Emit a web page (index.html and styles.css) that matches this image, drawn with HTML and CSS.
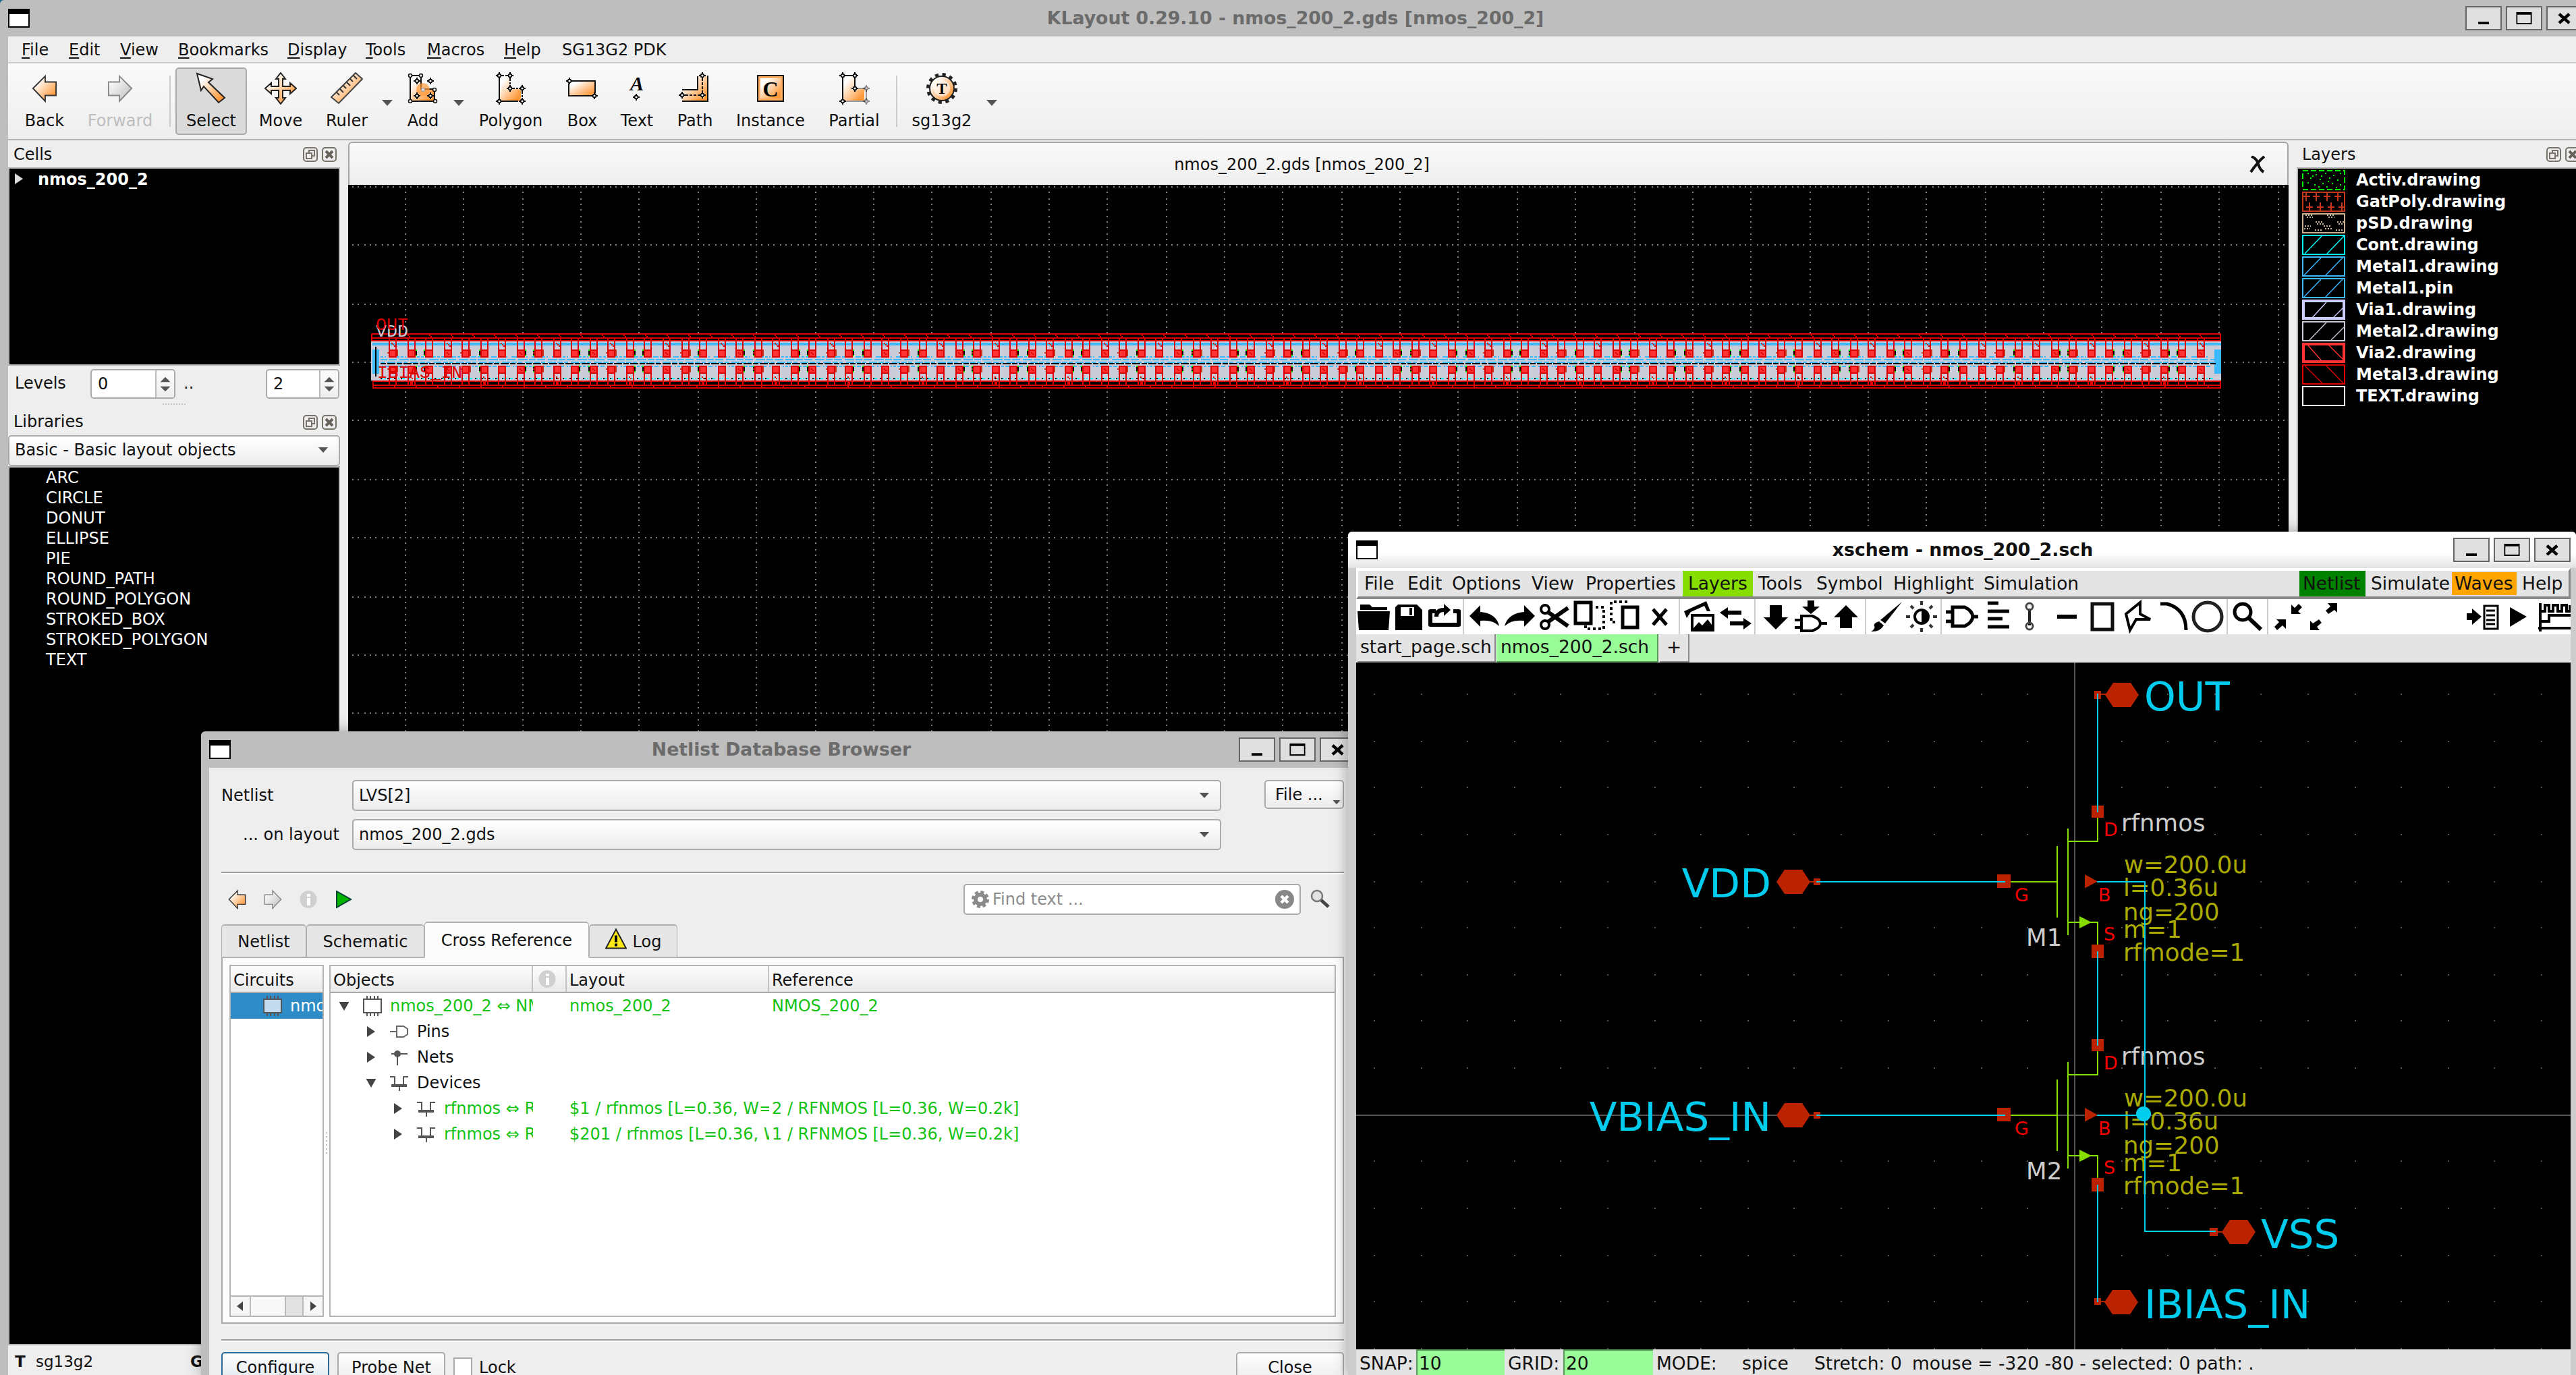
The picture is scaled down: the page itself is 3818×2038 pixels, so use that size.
FILE: index.html
```html
<!DOCTYPE html>
<html lang="en">
<head>
<meta charset="utf-8">
<title>KLayout 0.29.10 - nmos_200_2.gds [nmos_200_2]</title>
<link rel="stylesheet" href="styles.css">
</head>
<body>
<svg class="defs" width="0" height="0">
  <defs>
    <linearGradient id="og" x1="0" y1="0" x2="1" y2="1"><stop offset="0.2" stop-color="#fff"/><stop offset="0.85" stop-color="#ff9a3c"/></linearGradient>
    <linearGradient id="gg" x1="0" y1="0" x2="1" y2="1"><stop offset="0.1" stop-color="#fff"/><stop offset="1" stop-color="#bbb"/></linearGradient>
    <symbol id="float" viewBox="0 0 22 22"><rect x="1" y="1" width="20" height="20" rx="4" fill="none" stroke="#77736a" stroke-width="2"/><path d="M9 9V5h8v8h-4M5 9h8v8H5z" fill="none" stroke="#77736a" stroke-width="2"/></symbol>
    <symbol id="shut" viewBox="0 0 22 22"><rect x="1" y="1" width="20" height="20" rx="4" fill="none" stroke="#77736a" stroke-width="2"/><path d="M6 6l10 10M16 6L6 16" stroke="#66625a" stroke-width="4"/></symbol>
    <symbol id="down" viewBox="0 0 16 10"><path d="M0 0h16L8 9z" fill="#555"/></symbol>
    <symbol id="spin" viewBox="0 0 28 40"><path d="M6 17h16L14 9zM6 24h16l-8 8z" fill="#555"/></symbol>
    <symbol id="min" viewBox="0 0 54 36"><path d="M18 24h18v4H18z"/></symbol>
    <symbol id="max" viewBox="0 0 54 36"><path d="M14 8h26v20H14zM16 12v14h22V12z" fill-rule="evenodd"/></symbol>
    <symbol id="x" viewBox="0 0 54 36"><path d="M18 11l17 15M35 11L18 26" stroke="#000" stroke-width="5"/></symbol>
    <symbol id="back" viewBox="0 0 40 44"><path d="M2 22L21 3v9h17v21H21v9z" fill="url(#og)" stroke="#333" stroke-width="2"/></symbol>
    <symbol id="fwd" viewBox="0 0 40 44"><path d="M38 22L19 3v9H2v21h17v9z" fill="url(#gg)" stroke="#888" stroke-width="2"/></symbol>
    <symbol id="info" viewBox="0 0 26 28"><ellipse cx="13" cy="14" rx="12.5" ry="13" fill="#d0d0d0"/><path d="M11 12h5v11h-5zM11 6h5v4h-5z" fill="#fff"/></symbol>
    <symbol id="chip" viewBox="0 0 28 30"><path d="M1 5h26v20H1zM6 5V0M11 5V0M17 5V0M22 5V0M6 25v5M11 25v5M17 25v5M22 25v5" stroke-width="2"/></symbol>
    <symbol id="mos" viewBox="0 0 28 24"><path d="M0 3h7v12M27 3h-7v12M14 16v8" fill="none" stroke="#555" stroke-width="2"/><path d="M2 14h23v4H2z" fill="#555"/></symbol>
    <symbol id="hd" viewBox="-5 -5 10 10"><path d="M0-5L5 0 0 5-5 0z" fill="#fff"/><path d="M0-5V5M-5 0H5" stroke="#000" stroke-width="2"/><circle r="2.4" fill="#fff" stroke="#000" stroke-width="1.6"/></symbol>
    <symbol id="tri-r" viewBox="0 0 12 16"><path d="M0 0l12 8L0 16z" fill="currentColor"/></symbol>
    <symbol id="tri-d" viewBox="0 0 16 14"><path d="M0 0h16L8 14z" fill="#444"/></symbol>
  </defs>
</svg>

<main class="main-window">
  <header class="titlebar">
    <i class="wicon"></i>
    <h1>KLayout 0.29.10 - nmos_200_2.gds [nmos_200_2]</h1>
    <div class="wbtns"><svg><use href="#min"/></svg><svg><use href="#max"/></svg><svg><use href="#x"/></svg></div>
  </header>
  <div class="client">
    <nav class="menubar">
      <span><u>F</u>ile</span><span><u>E</u>dit</span><span><u>V</u>iew</span><span><u>B</u>ookmarks</span><span><u>D</u>isplay</span><span><u>T</u>ools</span><span><u>M</u>acros</span><span><u>H</u>elp</span><span>SG13G2 PDK</span>
    </nav>
    <div class="toolbar">
      <div class="tool t-back"><svg class="arr"><use href="#back"/></svg>Back</div>
      <div class="tool t-fwd off"><svg class="arr"><use href="#fwd"/></svg>Forward</div>
      <i class="sep s1"></i>
      <div class="tool t-sel on"><svg viewBox="0 0 48 48"><path d="M3 2l23 8-6 5 24 23-9 7-22-24-4 6z" fill="url(#og)" stroke="#222" stroke-width="2"/></svg>Select</div>
      <div class="tool t-move"><svg viewBox="0 0 48 48"><path d="M24 1l7 9h-4v11h11v-5l9 8-9 8v-5H27v11h4l-7 9-7-9h4V27H10v5l-9-8 9-8v5h11V10h-4z" fill="url(#og)" stroke="#222" stroke-width="2"/></svg>Move</div>
      <div class="tool t-ruler"><svg viewBox="0 0 48 48"><path d="M37 1l10 9-35 36-11-9z" fill="url(#og)" stroke="#444" stroke-width="2"/><path d="M34 5l5 5M29 10l4 4M24 15l5 5M19 20l4 4M14 25l5 5M9 30l4 4" stroke="#333" stroke-width="2"/></svg>Ruler</div>
      <svg class="drop"><use href="#down"/></svg>
      <div class="tool t-add"><svg viewBox="0 0 48 48"><path d="M5 5h16v20h20v18H5z" fill="url(#og)" stroke="#111" stroke-width="2"/><circle cx="24" cy="26" r="10" fill="#ff9a3c" opacity=".7"/><circle cx="24" cy="26" r="2.5" fill="#ddd" stroke="#999"/><use href="#hd" x="10" y="8" width="10" height="10"/><use href="#hd" x="30" y="8" width="10" height="10"/><use href="#hd" x="10" y="30" width="10" height="10"/><use href="#hd" x="30" y="30" width="10" height="10"/><g fill="#fff" stroke="#111" stroke-width="1.5"><circle cx="5" cy="5" r="2.5"/><circle cx="21" cy="5" r="2.5"/><circle cx="41" cy="26" r="2.5"/><circle cx="5" cy="43" r="2.5"/><circle cx="42" cy="43" r="2.5"/></g></svg>Add</div>
      <svg class="drop"><use href="#down"/></svg>
      <div class="tool t-poly"><svg viewBox="0 0 48 48"><path d="M7 5h16v20h16v18H7z" fill="url(#og)"/><path d="M7 9v30M11 43h24" stroke="#111" stroke-width="2"/><path d="M11 5h8M23 10v12M27 24h8M41 29v10" stroke="#111" stroke-width="2" stroke-dasharray="3 2"/><use href="#hd" x="2" y="0" width="10" height="10"/><use href="#hd" x="18" y="0" width="10" height="10"/><use href="#hd" x="18" y="19" width="10" height="10"/><use href="#hd" x="36" y="19" width="10" height="10"/><use href="#hd" x="2" y="38" width="10" height="10"/><use href="#hd" x="36" y="38" width="10" height="10"/></svg>Polygon</div>
      <div class="tool t-box"><svg viewBox="0 0 48 48"><path d="M4 13h39v22H4z" fill="url(#og)" stroke="#111" stroke-width="2"/><use href="#hd" x="0" y="8" width="10" height="10"/><use href="#hd" x="37" y="30" width="10" height="10"/></svg>Box</div>
      <div class="tool t-text"><svg viewBox="0 0 48 48"><text x="24" y="27" text-anchor="middle" class="aicon">A</text><use href="#hd" x="18" y="32" width="10" height="10"/></svg>Text</div>
      <div class="tool t-path"><svg viewBox="0 0 48 48"><path d="M5 26h23V5h15v38H5z" fill="url(#og)"/><path d="M5 26h23V6M43 5v38H5" fill="none" stroke="#111" stroke-width="2"/><path d="M35 9v22M10 34h20" stroke="#111" stroke-width="2" stroke-dasharray="4 2"/><use href="#hd" x="30" y="0" width="10" height="10"/><use href="#hd" x="0" y="29" width="10" height="10"/><use href="#hd" x="30" y="29" width="10" height="10"/></svg>Path</div>
      <div class="tool t-inst"><svg viewBox="0 0 48 48"><rect x="5" y="5" width="38" height="38" fill="#ffae66" stroke="#111" stroke-width="2"/><rect x="9" y="9" width="30" height="30" fill="url(#og)"/><text x="24" y="36" text-anchor="middle" class="cicon">C</text></svg>Instance</div>
      <div class="tool t-part"><svg viewBox="0 0 48 48"><path d="M7 5h18v20h14v18H7z" fill="url(#og)"/><path d="M7 5v38M7 5h18v18" fill="none" stroke="#111" stroke-width="2"/><path d="M28 24h14v19H10" fill="none" stroke="#999" stroke-width="2"/><use href="#hd" x="2" y="0" width="10" height="10"/><use href="#hd" x="20" y="0" width="10" height="10"/><use href="#hd" x="20" y="19" width="10" height="10"/><use href="#hd" x="2" y="38" width="10" height="10"/><g opacity=".45"><use href="#hd" x="37" y="19" width="10" height="10"/><use href="#hd" x="37" y="38" width="10" height="10"/></g></svg>Partial</div>
      <i class="sep s2"></i>
      <div class="tool t-sg"><svg viewBox="0 0 48 48"><circle cx="24" cy="24" r="20" fill="none" stroke="#222" stroke-width="6" stroke-dasharray="5 5.47"/><circle cx="24" cy="24" r="18" fill="url(#og)" stroke="#222" stroke-width="2"/><circle cx="24" cy="24" r="12" fill="#fff" opacity=".55"/><text x="24" y="32" text-anchor="middle" class="ticon">T</text></svg>sg13g2</div>
      <svg class="drop"><use href="#down"/></svg>
    </div>
    <div class="workspace">
      <aside class="left-dock">
        <div class="dock-title"><span>Cells</span><svg><use href="#float"/></svg><svg><use href="#shut"/></svg></div>
        <div class="cells"><svg><use href="#tri-r"/></svg><b>nmos_200_2</b></div>
        <div class="levels"><label>Levels</label><div class="spin sp1"><span>0</span><svg><use href="#spin"/></svg></div><em>..</em><div class="spin sp2"><span>2</span><svg><use href="#spin"/></svg></div></div>
        <div class="grip"></div>
        <div class="dock-title lib"><span>Libraries</span><svg><use href="#float"/></svg><svg><use href="#shut"/></svg></div>
        <div class="combo libcombo"><span>Basic - Basic layout objects</span><svg><use href="#down"/></svg></div>
        <ul class="liblist"><li>ARC</li><li>CIRCLE</li><li>DONUT</li><li>ELLIPSE</li><li>PIE</li><li>ROUND_PATH</li><li>ROUND_POLYGON</li><li>STROKED_BOX</li><li>STROKED_POLYGON</li><li>TEXT</li></ul>
        <div class="status"><b>T</b><span>sg13g2</span><b>G</b></div>
      </aside>
      <section class="view">
        <div class="view-tab"><span>nmos_200_2.gds [nmos_200_2]</span><svg viewBox="0 0 26 26"><path d="M4 1q8 3 10 11t8 12M23 1Q14 8 3 24" fill="none" stroke="#111" stroke-width="4"/></svg></div>
        <svg class="layout-canvas" viewBox="516 274 2876 1764" shape-rendering="crispEdges">
          <g id="grid" fill="#808080"></g>
          <g id="strip"></g>
          <g class="gds">
            <text x="557" y="499" textLength="48" lengthAdjust="spacingAndGlyphs" fill="#ccccd9">VDD</text>
            <text x="557" y="489" textLength="48" lengthAdjust="spacingAndGlyphs" fill="#dd0000">OUT</text>
            <text x="559" y="560" textLength="126" lengthAdjust="spacingAndGlyphs" fill="#dd0000">IBIAS_IN</text>
          </g>
        </svg>
      </section>
      <aside class="layers">
        <div class="dock-title"><span>Layers</span><svg><use href="#float"/></svg><svg><use href="#shut"/></svg></div>
        <ul>
          <li><svg viewBox="0 0 64 30" shape-rendering="crispEdges"><rect x="1" y="1" width="62" height="28" fill="none" stroke="#0f0" stroke-width="2" stroke-dasharray="8 4"/><path d="M8 5h2M20 7h2M34 5h2M46 8h2M56 5h2M12 12h2M26 14h2M40 12h2M52 15h2M8 19h2M18 22h2M30 20h2M44 20h2M56 22h2M24 25h2M36 25h2M50 26h2M15 9h2M28 9h2M38 17h2" stroke="#0f0" stroke-width="2"/></svg>Activ.drawing</li>
          <li><svg viewBox="0 0 64 30" shape-rendering="crispEdges"><path d="M1 1h62v28H1zM2 7h10M6 2v12M16 7h10M21 2v12M32 7h10M37 2v12M48 7h10M53 2v12M6 23h10M11 16v12M22 23h10M27 16v12M38 23h10M43 16v12M54 23h10M59 16v12" fill="none" stroke="#c4391e" stroke-width="2"/></svg>GatPoly.drawing</li>
          <li><svg viewBox="0 0 64 30" shape-rendering="crispEdges"><rect x="1" y="1" width="62" height="28" fill="none" stroke="#c8b494" stroke-width="2"/><path d="M5 3h10M7 6h9M37 3h10M39 6h9M20 13h10M22 16h11M52 13h10M54 16h9M4 19h9M3 23h9M32 19h10M34 23h10M19 25h10M50 25h10" stroke="#c8b494" stroke-width="2" stroke-dasharray="2 2"/></svg>pSD.drawing</li>
          <li><svg viewBox="0 0 64 30"><path d="M1 1h62v28H1z" fill="none" stroke="#0ff" stroke-width="2"/><path d="M4 28L29 2M37 28L62 2" stroke="#0ff" stroke-width="1.4"/></svg>Cont.drawing</li>
          <li><svg viewBox="0 0 64 30"><path d="M1 1h62v28H1z" fill="none" stroke="#3db9ff" stroke-width="2"/><path d="M3 28L28 2M35 28L60 2" stroke="#3db9ff" stroke-width="1.4"/></svg>Metal1.drawing</li>
          <li><svg viewBox="0 0 64 30"><path d="M1 1h62v28H1z" fill="none" stroke="#3db9ff" stroke-width="2"/><path d="M3 28L28 2M35 28L60 2" stroke="#3db9ff" stroke-width="1.4"/></svg>Metal1.pin</li>
          <li><svg viewBox="0 0 64 30"><path d="M2 2h60v26H2z" fill="none" stroke="#ccccff" stroke-width="4"/><path d="M14 28L36 4M46 27L61 12" stroke="#ccccff" stroke-width="1.4"/></svg>Via1.drawing</li>
          <li><svg viewBox="0 0 64 30"><path d="M1 1h62v28H1z" fill="none" stroke="#ccccd9" stroke-width="2"/><path d="M11 28L36 2M43 28L62 9" stroke="#ccccd9" stroke-width="1.4"/></svg>Metal2.drawing</li>
          <li><svg viewBox="0 0 64 30"><path d="M2 2h60v26H2z" fill="none" stroke="#ff3333" stroke-width="4"/><path d="M9 4l21 24M40 4l20 20" stroke="#ff3333" stroke-width="1.4"/></svg>Via2.drawing</li>
          <li><svg viewBox="0 0 64 30"><path d="M1 1h62v28H1z" fill="none" stroke="#dd0000" stroke-width="2"/><path d="M4 2l26 26M36 2l25 26" stroke="#dd0000" stroke-width="1.4"/></svg>Metal3.drawing</li>
          <li><svg viewBox="0 0 64 30"><path d="M1 1h62v28H1z" fill="none" stroke="#fff" stroke-width="2"/></svg>TEXT.drawing</li>
        </ul>
      </aside>
    </div>
  </div>
</main>

<section class="dialog">
  <header class="titlebar">
    <i class="wicon"></i>
    <h1>Netlist Database Browser</h1>
    <div class="wbtns"><svg><use href="#min"/></svg><svg><use href="#max"/></svg><svg><use href="#x"/></svg></div>
  </header>
  <div class="dialog-body">
    <div class="form">
      <label>Netlist</label><div class="combo"><span>LVS[2]</span><svg><use href="#down"/></svg></div><div class="filebtn">File ...<svg><use href="#down"/></svg></div>
      <label class="r">... on layout</label><div class="combo"><span>nmos_200_2.gds</span><svg><use href="#down"/></svg></div>
    </div>
    <hr>
    <div class="navrow">
      <svg class="n1"><use href="#back"/></svg><svg class="n1"><use href="#fwd"/></svg><svg class="n3"><use href="#info"/></svg>
      <svg class="n4" viewBox="0 0 24 26"><path d="M1 1l21 12L1 25z" fill="#00b400" stroke="#043" stroke-width="2"/></svg>
      <div class="search"><svg viewBox="0 0 28 28"><circle cx="14" cy="14" r="7" fill="none" stroke="#8a8a8a" stroke-width="6"/><circle cx="14" cy="14" r="11" fill="none" stroke="#8a8a8a" stroke-width="4" stroke-dasharray="5 3.64"/></svg><span>Find text ...</span><svg viewBox="0 0 28 28"><circle cx="14" cy="14" r="14" fill="#888"/><path d="M9 9l10 10M19 9L9 19" stroke="#fff" stroke-width="4.5"/></svg></div>
      <svg class="mag" viewBox="0 0 30 30"><path d="M16 16l11 10" stroke="#444" stroke-width="5"/><circle cx="10" cy="10" r="8" fill="#e4e4e4" stroke="#777" stroke-width="2.5"/></svg>
    </div>
    <div class="tabs"><span class="tb1">Netlist</span><span class="tb2">Schematic</span><span class="tb3">Cross Reference</span><span class="tb4"><svg viewBox="0 0 32 30"><path d="M16 1l15 28H1z" fill="#ffe919" stroke="#222" stroke-width="2"/><path d="M14 10h4v10h-4zM14 22h4v4h-4z"/></svg>Log</span></div>
    <div class="pane">
      <div class="circuits">
        <div class="th"><span>Circuits</span></div>
        <div class="sel"><svg><use href="#chip"/></svg><span>nmos_200_2</span></div>
        <div class="hscroll"><svg viewBox="0 0 28 28"><path d="M18 7v14L9 14z" fill="#444"/></svg><i></i><b></b><svg viewBox="0 0 28 28"><path d="M10 7v14l9-7z" fill="#444"/></svg></div>
      </div>
      <div class="splitter"></div>
      <div class="objects">
        <div class="th row"><span>Objects</span><span><svg class="hi"><use href="#info"/></svg></span><span>Layout</span><span>Reference</span></div>
        <div class="row g"><span class="l1"><svg class="td"><use href="#tri-d"/></svg><svg class="ic chip"><use href="#chip"/></svg>nmos_200_2 ⇔ NMOS_200_2</span><span></span><span>nmos_200_2</span><span>NMOS_200_2</span></div>
        <div class="row"><span class="l2"><svg class="tr"><use href="#tri-r"/></svg><svg class="ic" viewBox="0 0 28 24"><path d="M0 12h10M10 4h10l6 4v8l-6 4H10z" fill="none" stroke="#666" stroke-width="2"/></svg>Pins</span></div>
        <div class="row"><span class="l2"><svg class="tr"><use href="#tri-r"/></svg><svg class="ic" viewBox="0 0 28 24"><path d="M2 7h24M11 7v17" stroke="#555" stroke-width="2"/><circle cx="11" cy="7" r="5" fill="#555"/></svg>Nets</span></div>
        <div class="row"><span class="l2"><svg class="td"><use href="#tri-d"/></svg><svg class="ic"><use href="#mos"/></svg>Devices</span></div>
        <div class="row g"><span class="l3"><svg class="tr"><use href="#tri-r"/></svg><svg class="ic"><use href="#mos"/></svg>rfnmos ⇔ RFNMOS</span><span></span><span>$1 / rfnmos [L=0.36, W=0.2k]</span><span>2 / RFNMOS [L=0.36, W=0.2k]</span></div>
        <div class="row g"><span class="l3"><svg class="tr"><use href="#tri-r"/></svg><svg class="ic"><use href="#mos"/></svg>rfnmos ⇔ RFNMOS</span><span></span><span>$201 / rfnmos [L=0.36, W=0.2k]</span><span>1 / RFNMOS [L=0.36, W=0.2k]</span></div>
      </div>
    </div>
    <hr class="h2">
    <div class="buttons"><button class="def">Configure</button><button>Probe Net</button><i class="check"></i><span>Lock</span><button class="close">Close</button></div>
  </div>
</section>

<section class="xschem">
  <header class="titlebar">
    <i class="wicon"></i>
    <h1>xschem - nmos_200_2.sch</h1>
    <div class="wbtns"><svg><use href="#min"/></svg><svg><use href="#max"/></svg><svg><use href="#x"/></svg></div>
  </header>
  <div class="xbody">
    <nav class="xmenu">
      <span>File</span><span>Edit</span><span>Options</span><span>View</span><span>Properties</span><span class="lay">Layers</span><span>Tools</span><span>Symbol</span><span>Highlight</span><span>Simulation</span><span class="net">Netlist</span><span>Simulate</span><span class="wav">Waves</span><span>Help</span>
    </nav>
    <div class="xtools">
      <svg viewBox="0 0 52 52"><path d="M6 8h14l4 4h22v4H6zM2 18h48l-2 28H4z"/></svg>
      <svg viewBox="0 0 52 52"><path d="M10 8h28l8 8v30H6V12zM14 12v13h20V12zM27 13h4v11h-4z" fill-rule="evenodd"/></svg>
      <svg viewBox="0 0 52 52"><path d="M14 18H6v20h42V18h-8" fill="none" stroke="#000" stroke-width="6" stroke-linejoin="round"/><path d="M12 26q0-13 14-13V7l10 9-10 9v-6q-8 0-8 7z"/></svg>
      <i></i>
      <svg viewBox="0 0 52 52"><path d="M4 25L20 9v10q24 2 28 21-10-10-28-8v9z"/></svg>
      <svg viewBox="0 0 52 52"><path d="M49 25L33 9v10Q9 21 4 40q10-10 29-8v9z"/></svg>
      <svg viewBox="0 0 52 52"><g fill="none" stroke="#000" stroke-width="4"><circle cx="12" cy="15" r="6"/><circle cx="12" cy="38" r="6"/></g><path d="M16 19l30 21M16 34l30-21" stroke="#000" stroke-width="6"/></svg>
      <svg viewBox="0 0 52 52"><path d="M5 5h23v31H5z" fill="none" stroke="#000" stroke-width="5"/><path d="M35 12h12v32H20v-6" fill="none" stroke="#000" stroke-width="4" stroke-dasharray="4 4"/></svg>
      <svg viewBox="0 0 52 52"><path d="M23 12h22v30H23z" fill="none" stroke="#000" stroke-width="5"/><path d="M30 4H6v30h10" fill="none" stroke="#000" stroke-width="4" stroke-dasharray="4 4"/></svg>
      <svg viewBox="0 0 52 52"><path d="M16 15l20 23M36 15L16 38" stroke="#000" stroke-width="5"/></svg>
      <i></i>
      <svg viewBox="0 0 52 52"><path d="M2 18L35 3l6 15h-5l-4-8-20 9-6 9z"/><path d="M12 22h35v26H12zM16 26v17l8-9 5 5 8-9 6 8V26z" fill-rule="evenodd"/></svg>
      <svg viewBox="0 0 52 52"><path d="M3 20L15 12v5h20v6H15v6zM50 36L38 28v5H18v6h20v6z"/></svg>
      <i></i>
      <svg viewBox="0 0 52 52"><path d="M17 9h18v18h9L26 45 8 27h9z"/></svg>
      <svg viewBox="0 0 52 52"><path d="M21 2h10v9h8L26 22 13 11h8z"/><path d="M12 25h16q12 4 12 11t-12 11H12zM2 31h10M2 42h10M40 36h10" fill="none" stroke="#000" stroke-width="4"/></svg>
      <svg viewBox="0 0 52 52"><path d="M17 43h18V27h9L26 9 8 27h9z"/></svg>
      <i></i>
      <svg viewBox="0 0 52 52"><path d="M49 4L24 36l-7-5zM15 33l7 6q-6 10-19 9 7-4 5-8t7-7z"/></svg>
      <svg viewBox="0 0 52 52"><circle cx="26" cy="26" r="10" fill="none" stroke="#000" stroke-width="4"/><path d="M26 15a11 11 0 0 1 0 22z"/><path d="M26 3v6M26 43v6M3 26h6M43 26h6M10 10l4 4M42 10l-4 4M10 42l4-4M42 42l-4-4" stroke="#333" stroke-width="4"/></svg>
      <i></i>
      <svg viewBox="0 0 52 52"><path d="M12 12h18q11 5 12 14-1 9-12 14H12zM2 19h10M2 33h10M42 26h8" fill="none" stroke="#000" stroke-width="5"/></svg>
      <svg viewBox="0 0 52 52"><path d="M12 6h16M12 18h32M12 29h22M12 41h32" stroke="#000" stroke-width="5"/></svg>
      <svg viewBox="0 0 52 52"><path d="M22 14v25" stroke="#222" stroke-width="4"/><circle cx="22" cy="11" r="5" fill="none" stroke="#444" stroke-width="3"/><circle cx="22" cy="40" r="5" fill="none" stroke="#444" stroke-width="3"/></svg>
      <svg viewBox="0 0 52 52"><path d="M11 26h29" stroke="#000" stroke-width="6"/></svg>
      <svg viewBox="0 0 52 52"><path d="M11 7h30v38H11z" fill="none" stroke="#111" stroke-width="5"/></svg>
      <svg viewBox="0 0 52 52"><path d="M30 5v17l15 8H24l-9 16L9 22z" fill="none" stroke="#000" stroke-width="4"/></svg>
      <svg viewBox="0 0 52 52"><path d="M8 7h10q28 8 28 39" fill="none" stroke="#000" stroke-width="5"/></svg>
      <svg viewBox="0 0 52 52"><circle cx="26" cy="26" r="21" fill="none" stroke="#222" stroke-width="5"/></svg>
      <i></i>
      <svg viewBox="0 0 52 52"><circle cx="18" cy="19" r="12" fill="none" stroke="#000" stroke-width="5"/><path d="M27 28l18 17" stroke="#000" stroke-width="6"/></svg>
      <i></i>
      <svg viewBox="0 0 52 52"><path d="M30 8v14h14l-4-4 6-6-5-5-6 6zM22 44V30H8l4 4-7 7 4 5 8-7z"/></svg>
      <svg viewBox="0 0 52 52"><path d="M46 6v14l-4-4-9 6-4-5 7-6-4-5zM6 46V32l4 4 9-6 4 5-7 6 4 5z"/></svg>
      <b></b>
      <svg viewBox="0 0 52 52"><path d="M2 21h8v-7l14 12-14 12v-7H2z"/><path d="M28 10h20v34H28zM31 17h13M31 24h13M31 31h13M31 37h13" fill="none" stroke="#000" stroke-width="3"/></svg>
      <svg viewBox="0 0 52 52"><path d="M14 12l25 14-25 15z"/></svg>
      <svg viewBox="0 0 52 52"><path d="M7 6v42M4 43h48M8 33h12V24h32M8 18h6V9h6v9h6V9h7v9h6V9h7v9h5V9" fill="none" stroke="#000" stroke-width="4"/></svg>
    </div>
    <div class="xtabs"><span>start_page.sch</span><span class="act">nmos_200_2.sch</span><span class="plus">+</span></div>
    <svg class="schem" viewBox="2010 982 1800 1018">
      <g id="dots" fill="#555" shape-rendering="crispEdges"></g>
      <path d="M3075 982v1018M2010 1653h1800" stroke="#555" stroke-width="2" shape-rendering="crispEdges"/>
      <defs>
        <g id="fet">
          <path d="M3109 1203v44h-44M3065 1228v158M3049 1254v106M2972 1307h77M3065 1367h44v40" fill="none" stroke="#8d0" stroke-width="2"/>
          <path d="M3082 1358l18 9-18 9z" fill="#8d0"/>
          <path d="M3100 1194h18v18h-18zM3100 1400h18v20h-18zM2960 1296h20v20h-20zM3090 1296l19 10.500-19 10z" fill="#b20"/>
          <g fill="#f00" font-size="27"><text x="3118" y="1239">D</text><text x="2986" y="1336">G</text><text x="3110" y="1336">B</text><text x="3118" y="1394">S</text></g>
          <text x="3144" y="1232" fill="#ccc">rfnmos</text>
          <g fill="#aa0"><text x="3148" y="1294">w=200.0u</text><text x="3147" y="1328">l=0.36u</text><text x="3147" y="1364">ng=200</text><text x="3147" y="1390">m=1</text><text x="3147" y="1424">rfmode=1</text></g>
        </g>
        <path id="hex" d="M0 0l12-18h26l12 18-12 18H12z" fill="#b20"/>
      </defs>
      <g font-size="35.500"><use href="#fet"/><use href="#fet" y="346"/><text x="3003" y="1402" fill="#ccc">M1</text><text x="3003" y="1748" fill="#ccc">M2</text></g>
      <use href="#hex" x="3120" y="1030"/><use href="#hex" x="2633" y="1307"/><use href="#hex" x="2633" y="1653"/><use href="#hex" x="3293" y="1826"/><use href="#hex" x="3119" y="1930"/>
      <g fill="#b20"><path d="M3104 1024h10v12h-10zM3110 1028h12v2h-12zM2688 1302h10v10h-10zM2680 1306h12v2h-12zM2688 1648h10v10h-10zM2680 1652h12v2h-12zM3275 1820h12v12h-12zM3284 1825h12v2h-12zM3104 1924h10v10h-10zM3110 1928h12v2h-12z"/></g>
      <path d="M3109 1028v176M2692 1307h280M3108 1307h71v518h105M3109 1410v140M2692 1653h280M3108 1653h71M3109 1756v174" fill="none" stroke="#0ce" stroke-width="2"/>
      <circle cx="3177" cy="1651" r="11" fill="#0ce"/>
      <g font-size="59.500" fill="#0ce">
        <text x="3178" y="1053">OUT</text>
        <text x="2625" y="1330" text-anchor="end">VDD</text>
        <text x="2625" y="1676" text-anchor="end">VBIAS_IN</text>
        <text x="3351" y="1850">VSS</text>
        <text x="3178" y="1954">IBIAS_IN</text>
      </g>
    </svg>
    <div class="xstatus"><span>SNAP:</span><span class="entry">10</span><span>GRID:</span><span class="entry">20</span><span>MODE:</span><span>spice</span><span>Stretch: 0</span><span>mouse = -320 -80 - selected: 0 path: .</span></div>
  </div>
</section>
<script src="canvas.js"></script>
</body>
</html>
```
FILE: styles.css
```css
* { box-sizing: border-box; }
html, body { margin: 0; width: 3818px; height: 2038px; overflow: hidden; }
body { font: 24px/1.2 "DejaVu Sans", sans-serif; color: #111; background: #1f6a8a; position: relative; white-space: nowrap; }
svg { display: block; flex: none; }
.defs { position: absolute; }
ul { list-style: none; margin: 0; padding: 0; }
span, em, label { font-style: normal; }

/* window chrome */
.main-window { width: 3818px; height: 2038px; overflow: hidden; background: #bebebe; border-top-left-radius: 6px; }
.titlebar { height: 54px; display: grid; align-items: center; position: relative; }
.titlebar h1 { margin: 0; font-size: 26.700px; line-height: 53px; height: 54px; font-weight: bold; color: #6b6b6b; text-align: center; grid-area: 1/1; }
.wicon { grid-area: 1/1; width: 32px; height: 28px; border: 2px solid #000; border-top-width: 8px; background: #fff; margin-left: 12px; }
.wbtns { grid-area: 1/1; justify-self: end; display: flex; gap: 6px; }
.wbtns svg { width: 54px; height: 36px; background: #dfdfdf; border: 2px solid #666; }
.main-window > .titlebar h1 { padding-left: 22px; }
.main-window .wbtns { margin-right: -10px; }
.client { margin-left: 12px; height: 1984px; background: #eee; display: flex; flex-direction: column; }

.menubar { height: 40px; padding-left: 20px; border-bottom: 2px solid #ccc; line-height: 40px; display: grid; grid-template-columns: 70px 76px 86px 162px 116px 91px 114px 86px 200px; }
.menubar u { text-underline-offset: 3px; text-decoration-thickness: 2px; }

.toolbar { height: 114px; border-bottom: 2px solid #b2b2b2; background: linear-gradient(#fafafa, #eee); display: flex; align-items: center; }
.tool { height: 100px; display: flex; flex-direction: column; align-items: center; line-height: 28px; padding-top: 7px; gap: 10px; border: 0; }
.tool svg { width: 48px; height: 48px; }
.tool svg.arr { width: 38px; height: 42px; margin: 3px 0; }
.tool.on { background: #dadada; border: 2px solid #aaa; border-radius: 5px; padding-top: 5px; }
.tool.off { color: #bebebe; }
.aicon { font: italic bold 30px "Liberation Serif", serif; }
.cicon { font: bold 32px "Liberation Serif", serif; }
.ticon { font: bold 23px "Liberation Serif", serif; }
.drop { width: 16px; height: 10px; margin: 0 4px; position: relative; top: 3px; }
.sep { width: 2px; height: 76px; background: #ccc; border-right: 0; }
.s1 { margin: 0 7px 0 15px; }
.s2 { margin: 0 4px; }
.t-back { width: 108px; } .t-fwd { width: 116px; } .t-sel { width: 106px; } .t-move { width: 100px; } .t-ruler { width: 96px; }
.t-add { width: 82px; } .t-poly { width: 130px; } .t-box { width: 82px; } .t-text { width: 80px; } .t-path { width: 92px; }
.t-inst { width: 132px; } .t-part { width: 116px; } .t-sg { width: 124px; }

.workspace { flex: 1; display: flex; gap: 12px; min-height: 0; }
.left-dock { width: 492px; display: flex; flex-direction: column; }
.dock-title { height: 40px; padding: 2px 5px 0 8px; display: flex; align-items: center; gap: 6px; }
.dock-title span { flex: 1; }
.dock-title svg { width: 22px; height: 22px; }
.cells { height: 294px; background: #000; border: 2px solid #b4b4b4; color: #fff; display: flex; align-items: flex-start; gap: 22px; line-height: 32px; padding-left: 8px; }
.cells svg { width: 12px; height: 16px; margin-top: 7px; color: #ddd; }
.levels { height: 53px; display: flex; align-items: center; padding-left: 10px; }
.levels label { width: 112px; }
.levels em { width: 134px; padding-left: 12px; }
.spin { height: 44px; border: 2px solid #aaa; border-radius: 5px; background: #fff; display: flex; line-height: 41px; overflow: hidden; }
.spin span { flex: 1; padding-left: 9px; }
.spin svg { width: 28px; height: 40px; background: linear-gradient(#fcfcfc, #eee); border-left: 2px solid #bbb; }
.sp1 { width: 126px; } .sp2 { width: 109px; }
.grip { height: 5px; width: 34px; align-self: center; border-bottom: 2px dotted #c4c4c4; margin-bottom: 5px; }
.left-dock .lib { height: 37px; margin-top: 2px; padding-top: 0; }
.combo { border: 2px solid #aaa; border-radius: 5px; background: linear-gradient(#fff, #ececec); display: flex; align-items: center; justify-content: space-between; height: 46px; padding: 0 15px 0 8px; }
.combo svg { width: 16px; height: 9px; }
.libcombo { margin-top: 1px; padding-bottom: 1px; }
.liblist { flex: 1; background: #000; color: #fff; border: 2px solid #b4b4b4; line-height: 30px; padding-left: 54px; }
.liblist li { height: 30px; }
.status { height: 44px; display: flex; align-items: center; font-size: 23px; padding: 6px 0 0 10px; }
.status b { width: 31px; }
.status span { width: 229px; }

.view { width: 2876px; padding-top: 2px; display: flex; flex-direction: column; }
.view-tab { height: 64px; flex: none; border: 2px solid #a4a4a4; border-bottom: 0; border-radius: 6px 6px 0 0; background: linear-gradient(#fafafa, #eee); display: flex; align-items: center; padding: 2px 31px 0 0; }
.view-tab span { flex: 1; text-align: center; padding-right: 22px; padding-left: 30px; }
.view-tab svg { width: 26px; height: 26px; }
.layout-canvas { width: 2876px; height: 1764px; background: #000; }
.gds { font-family: "Liberation Mono", monospace; font-size: 26px; }

.layers { width: 414px; }
.layers .dock-title { padding-right: 0; margin-right: -6px; }
.layers ul { background: #000; border: 2px solid #b4b4b4; border-right: 0; height: 1790px; padding-left: 6px; color: #fff; font-weight: bold; }
.layers li { height: 32px; line-height: 34px; display: flex; gap: 16px; }
.layers li svg { width: 64px; height: 30px; margin-top: 2px; }

/* netlist browser */
.dialog { position: absolute; left: 298px; top: 1084px; width: 1712px; height: 954px; background: #bebebe; border-radius: 6px 6px 0 0; box-shadow: 0 0 22px rgba(0,0,0,.35); overflow: hidden; }
.dialog .titlebar h1 { padding-left: 8px; }
.dialog-body { margin-left: 12px; background: #eee; height: 900px; padding: 18px 18px 0; display: flex; flex-direction: column; }
.form { display: grid; grid-template-columns: 194px 1288px 64px 118px; row-gap: 12px; align-items: center; height: 104px; }
.form .r { padding-left: 32px; }
.form .combo { padding-top: 1px; }
.filebtn { grid-column: 4; height: 43px; align-self: start; border: 2px solid #aaa; border-radius: 5px; background: linear-gradient(#fff, #ececec); line-height: 41px; padding-left: 14px; position: relative; }
.filebtn svg { position: absolute; right: 3px; bottom: 4px; width: 12px; height: 7px; }
hr { border: 0; height: 4px; margin: 32px 0 0; width: 1664px; background: linear-gradient(#a0a0a0 50%, #fff 50%); flex: none; }
.navrow { height: 46px; margin-top: 14px; display: flex; align-items: center; padding-left: 10px; flex: none; }
.n1 { width: 27px; height: 30px; margin-right: 26px; }
.n3 { width: 26px; height: 28px; margin-right: 28px; margin-left: 0; }
.n4 { width: 24px; height: 26px; }
.search { margin-left: 906px; width: 500px; height: 46px; border: 2px solid #aaa; border-radius: 5px; background: #fff; display: flex; align-items: center; padding: 0 8px 0 9px; color: #8c8c8c; }
.search svg { width: 28px; height: 28px; }
.search span { flex: 1; padding-left: 4px; }
.mag { width: 30px; height: 30px; margin-left: 14px; }
.tabs { display: flex; align-items: flex-end; height: 54px; margin-top: 10px; flex: none; position: relative; z-index: 1; margin-bottom: -2px; }
.tabs span { height: 50px; line-height: 50px; padding-top: 2px; border: 2px solid #b0b0b0; border-left-width: 1px; border-right-width: 1px; border-radius: 5px 5px 0 0; background: #e6e6e6; text-align: center; display: flex; justify-content: center; align-items: center; }
.tb1 { width: 126px; } .tb2 { width: 175px; } .tabs .tb3 { width: 244px; height: 54px; line-height: 52px; background: #fcfcfc; border-bottom-color: #fcfcfc; } .tb4 { width: 131px; gap: 9px; }
.tb4 svg { width: 32px; height: 31px; margin-top: -10px; }
.pane { width: 1664px; height: 544px; flex: none; border: 2px solid #aaa; background: #fcfcfc; padding: 10px; display: flex; }
.circuits { width: 140px; height: 522px; border: 2px solid #b4b4b4; background: #fff; display: flex; flex-direction: column; overflow: hidden; }
.th { height: 40px; background: linear-gradient(#fdfdfd, #e9e9e9); border-bottom: 2px solid #aaa; line-height: 43px; }
.circuits .th { padding-left: 4px; }
.sel { height: 38px; line-height: 38px; background: #308cc6; color: #fff; display: flex; padding-left: 48px; gap: 12px; align-items: center; }
.sel svg { width: 28px; height: 30px; fill: #c3dcef; stroke: #555; }
.hscroll { margin-top: auto; height: 30px; border-top: 2px solid #b4b4b4; display: flex; background: #e2e2e2; }
.hscroll svg { width: 28px; height: 28px; background: #f6f6f6; }
.hscroll i { width: 54px; background: #f8f8f8; border: 1px solid #bbb; border-width: 0 2px; }
.hscroll b { flex: 1; border-right: 2px solid #bbb; }
.splitter { width: 8px; background: radial-gradient(circle, #bbb 1px, transparent 1.500px) 0 0 / 8px 6px; height: 34px; margin-top: 246px; }
.objects { width: 1492px; height: 522px; border: 2px solid #b4b4b4; background: #fff; }
.row { display: grid; grid-template-columns: 300px 50px 300px 1fr; height: 38px; line-height: 38px; }
.row > span { overflow: hidden; padding-left: 4px; }
.th.row { height: 40px; line-height: 43px; }
.th.row > span { border-right: 2px solid #c4c4c4; padding-left: 4px; }
.th.row > span:last-child { border: 0; }
.hi { width: 26px; height: 28px; margin: 5px 0 0 4px; }
.row.g { color: #14c314; }
.row .l1, .row .l2, .row .l3 { display: flex; align-items: center; }
.row .l1 { padding-left: 12px; } .row .l2 { padding-left: 52px; } .row .l3 { padding-left: 92px; }
.td { width: 16px; height: 13px; margin-right: 20px; }
.tr { width: 12px; height: 16px; margin: 0 22px 0 2px; color: #444; }
.ic { width: 28px; height: 24px; margin-right: 12px; }
.ic.chip { height: 30px; fill: #fff; stroke: #555; }
.h2 { margin-top: 23px; }
.buttons { display: flex; margin-top: 15px; width: 1664px; flex: none; }
.buttons button { font: 24px "DejaVu Sans", sans-serif; width: 160px; height: 46px; flex: none; border: 2px solid #aaa; border-radius: 5px; background: linear-gradient(#fff, #ececec); padding: 0; margin-right: 12px; color: #111; }
.buttons .def { border-color: #2a6a96; background: linear-gradient(#fff, #dfe8ee); }
.check { width: 28px; height: 28px; border: 2px solid #aaa; background: #fff; margin: 8px 10px 0 0; }
.buttons span { line-height: 46px; }
.buttons .close { margin: 0 0 0 auto; }

/* xschem */
.xschem { position: absolute; left: 1998px; top: 788px; width: 1820px; height: 1250px; background: #ccc; border-radius: 6px 6px 0 0; box-shadow: 0 0 22px rgba(0,0,0,.35); overflow: hidden; }
.xschem .titlebar { background: linear-gradient(#fff 60%, #e2e2e2); }
.xschem .titlebar h1 { color: #111; padding-left: 2px; line-height: 54px; }
.xschem .wbtns { margin-right: 8px; }
.xbody { margin: 0 8px 0 12px; font-size: 26.500px; }
.xmenu { height: 46px; border-top: 4px solid #fff; border-bottom: 4px solid #888; border-right: 3px solid #888; border-left: 3px solid #fff; background: #e4e4e4; line-height: 37px; display: grid; grid-template-columns: 65px 66px 118px 80px 152px 104px 86px 114px 134px 476px 98px 128px 96px 1fr; }
.xmenu span { padding-left: 8px; }
.xmenu span:first-child { padding-left: 9px; }
.xmenu .lay { background: #8d0; }
.xmenu .net { background: #008200; padding-left: 5px; }
.xmenu .wav { background: #ffa500; padding-left: 4px; margin: 2px 0; line-height: 33px; }
.xtools { height: 52px; background: #fff; display: flex; }
.xtools svg { width: 52px; height: 52px; }
.xtools i { width: 8px; border-right: 4px solid #fff; border-left: 2px solid #fff; background: #ccc; }
.xtools b { flex: 1; }
.xtabs { height: 42px; background: #e4e4e4; display: flex; gap: 2px; line-height: 38px; padding-left: 2px; }
.xtabs span { height: 42px; width: 205px; padding-left: 4px; border: 2px solid #888; border-top: 0; border-left: 0; flex: none; }
.xtabs .act { width: 240px; background: #98fb98; border-color: #5b975b; padding-left: 6px; margin-left: -1px; }
.xtabs .plus { width: 44px; padding-left: 10px; border-left: 0; }
.schem { width: 1800px; height: 1018px; background: #000; font-family: "DejaVu Sans", sans-serif; }
.xstatus { height: 38px; background: #e4e4e4; line-height: 41px; display: grid; grid-template-columns: 89px 131px 87px 133px 127px 107px 145px 1fr; }
.xstatus span { padding-left: 5px; white-space: nowrap; }
.xstatus .entry { background: #98fb98; border-top: 2px solid #5b975b; border-left: 2px solid #5b975b; line-height: 37px; padding-left: 2px; }
```
FILE: canvas.js
```js
const NS = 'http://www.w3.org/2000/svg';
const even = v => 2 * Math.round(v / 2);
const rect = (x, y, w, h) => `M${x} ${y}h${w}v${h}h${-w}z`;
const add = (parent, d, fill) => {
  const p = document.createElementNS(NS, 'path');
  p.setAttribute('d', d);
  if (fill) p.setAttribute('fill', fill);
  parent.appendChild(p);
};

// dotted layout grid: a line every ten dots
const pitch = 8.672;
let d = '';
for (let i = -9; i < 323; i++) {
  for (let j = 0; j < 100; j++) {
    if (i % 10 && j % 10) continue;
    d += rect(even(600 + i * pitch), even(276 + j * pitch), 2, 2);
  }
}
add(document.getElementById('grid'), d);

// schematic grid
d = '';
for (let i = 0; i < 26; i++)
  for (let j = 0; j < 15; j++)
    d += rect(even(2036 + i * 69.2), even(1028 + j * 69.28), 2, 2);
add(document.getElementById('dots'), d);

// transistor row
const strip = document.getElementById('strip');
const RED = '#dd0000', L = 550, R = 3292, W = R - L;
add(strip, rect(L, 494, W, 82), '#000');
add(strip, rect(L, 506, W, 58), '#ccccd9');
add(strip, rect(L, 494, W, 2) + rect(L, 500, W, 2) + rect(L, 504, W, 2) + rect(552, 564, W - 2, 2) +
  rect(552, 570, W - 2, 2) + rect(552, 574, W - 2, 2) + rect(L, 494, 2, 12) + rect(552, 564, 2, 12) +
  rect(R - 2, 494, 2, 12) + rect(R - 2, 564, 2, 12), RED);
add(strip, rect(552, 508, W - 2, 4) + rect(552, 518, 10, 36) + rect(R - 10, 518, 10, 36), '#3db9ff');
add(strip, rect(556, 514, 2, 44), '#000');

const dashes = (y, seq, colour) => {
  let out = '', x = 564, k = 0;
  while (x < R - 14) {
    out += rect(x, y, seq[k % seq.length], 2);
    x += seq[k % seq.length] + seq[(k + 1) % seq.length];
    k += 2;
  }
  add(strip, out, colour);
};
dashes(528, [4, 2, 2, 6, 8, 2, 4, 2], '#3db9ff');
dashes(532, [10, 2, 12, 4, 14, 2], '#3db9ff');
dashes(536, [6, 4, 12, 2, 8, 2], '#3db9ff');
dashes(538, [8, 2, 12, 2], '#000');
dashes(542, [4, 2, 6, 4, 2, 2], '#3db9ff');
dashes(560, [4, 2, 2, 2, 6, 4], '#00ffff');
dashes(560, [2, 8], '#000');

let ticks = '';
for (let x = 604; x < R - 6; x += 32) ticks += rect(x, 496, 2, 2) + rect(x + 2, 498, 2, 2);
for (let x = 584; x < R - 6; x += 32) ticks += rect(x, 572, 2, 2);

let red = '', core = '', green = '', black = '', brown = '', lilac = '', cuts = '';
for (let i = 0; i < 100; i++) {
  const x = even(576 + i * 27.07);
  red += rect(x, 502, 2, 18) + rect(x + 10, 502, 2, 18) + rect(x, 552, 2, 18) + rect(x + 10, 552, 2, 18);
  red += rect(x, 518, 12, 12) + rect(x, 542, 12, 12);
  core += rect(x + 2, 520, 8, 8) + rect(x + 2, 544, 8, 8);
  if (i % 3 === 0) red += rect(x + 4, 508, 2, 2) + rect(x + 6, 510, 2, 2) + rect(x + 8, 512, 2, 2);
  if (i % 4 === 1) red += rect(x + 4, 558, 2, 2) + rect(x + 6, 560, 2, 2) + rect(x + 4, 566, 4, 4);
  if (i % 4 === 3) cuts += rect(x + 4, 522, 2, 2) + rect(x + 6, 524, 2, 2) + rect(x + 4, 546, 2, 2) + rect(x + 6, 548, 2, 2);
  for (const y of [518, 542]) {
    if (i % 3 === 1) { black += rect(x + 12, y + 2, 2, 8); green += rect(x + 12, y, 2, 2) + rect(x + 12, y + 8, 2, 2); }
    if (i % 3 === 2) { black += rect(x - 2, y + 2, 2, 8); green += rect(x - 2, y, 2, 2) + rect(x - 2, y + 8, 2, 2); }
    if (i % 4 === 0) brown += rect(x + 12, y, 2, 10) + rect(x - 2, y + 4, 2, 2);
    if (i % 5 === 3) lilac += rect(x - 2, y + 2, 2, 8);
  }
}
add(strip, lilac, '#ccccff');
add(strip, black, '#000');
add(strip, green, '#00ff00');
add(strip, brown, '#c4391e');
add(strip, red + ticks, RED);
add(strip, core, '#ff3333');
add(strip, cuts, RED);
```
